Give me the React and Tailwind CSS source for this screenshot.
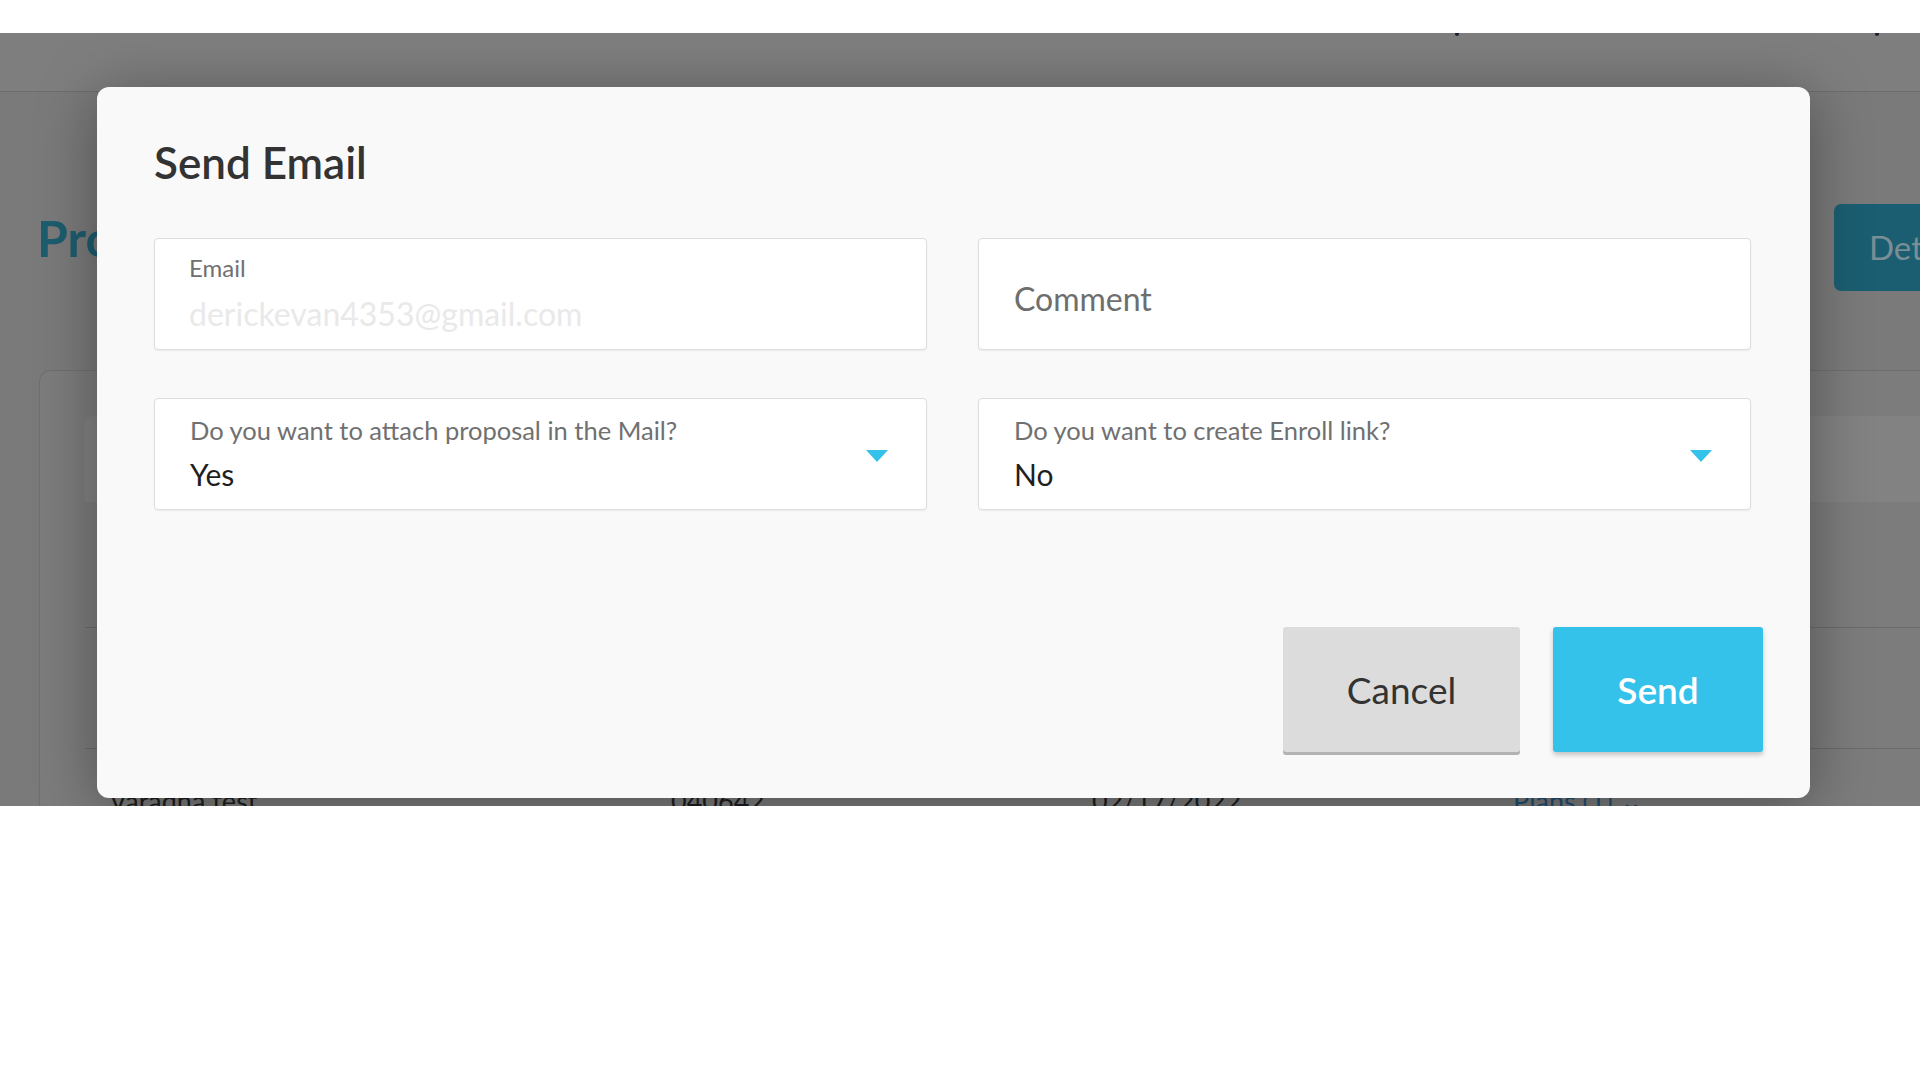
import React from 'react';

// dimmed page that sits behind the modal backdrop
const BackgroundPage = () => (
  <div className="absolute inset-0 bg-[#7a7a7a]">
    <div className="relative h-[59px] bg-[#7e7e7e] border-b border-[#6d6d6d]">
      <span className="absolute top-0 left-[1455px] w-[4px] h-[3px] rounded-b-full bg-[#1c2431]"></span>
      <span className="absolute top-0 left-[1875px] w-[4px] h-[3px] rounded-b-full bg-[#1c2431]"></span>
    </div>

    <div className="flex items-start justify-between pl-[37px] mt-[112px]">
      <h1 className="mt-[6px] text-[50px] leading-[56px] font-bold text-[#1d5d6e]">Proposals</h1>
      <div className="w-[86px] h-[87px] overflow-hidden whitespace-nowrap rounded-l-[7px] bg-[#1b5e71] pl-[35px] flex items-center text-[33px] text-[#7a8e95]">
        Details
      </div>
    </div>

    <div className="ml-[39px] mt-[79px] h-[500px] rounded-tl-[12px] border-l border-t border-[#6f6f6f] bg-[#7c7c7c]">
      <div className="ml-[45px] mt-[45px] h-[86px] rounded-tl-[8px] bg-[#828282]"></div>
      <div className="ml-[45px] mt-[125px] h-px bg-[#6a6a6a]"></div>
      <div className="ml-[45px] mt-[120px] h-px bg-[#6a6a6a]"></div>
      <div className="relative mt-[36px] h-[40px] text-[27px] leading-[32px] text-[#1e1e1e]">
        <span className="absolute left-[69px]">Varadha test</span>
        <span className="absolute left-[631px]">040642</span>
        <span className="absolute left-[1052px]">02/17/2022</span>
        <span className="absolute left-[1473px] text-[#1f4f73]">Plans (1) ⌄</span>
      </div>
    </div>
  </div>
);

const CaretDown = () => (
  <svg width="22" height="12" viewBox="0 0 22 12" className="shrink-0">
    <path d="M0 0 L22 0 L11 12 Z" fill="#35c2ea" />
  </svg>
);

const SelectField = ({ label, value }) => (
  <div className="h-[112px] bg-white border border-[#dedede] rounded-[4px] shadow-[0_1px_2px_rgba(0,0,0,0.06)] pl-[35px] pr-[38px] flex items-start justify-between">
    <div className="pt-[17px]">
      <div className="text-[25.5px] leading-[28px] text-[#707070]">{label}</div>
      <div className="mt-[12px] text-[30px] leading-[36px] text-[#1f1f1f]">{value}</div>
    </div>
    <div className="pt-[51px]">
      <CaretDown />
    </div>
  </div>
);

export default function App() {
  return (
    <div className="w-[1920px] h-[1080px] bg-white overflow-hidden font-['Lato','Open_Sans',sans-serif]">
      <div className="relative mt-[33px] h-[773px] overflow-hidden">
        <BackgroundPage />

        {/* Send Email modal */}
        <div className="absolute left-[97px] top-[54px] w-[1713px] h-[711px] rounded-[12px] bg-[#f9f9f9] shadow-[0_8px_60px_rgba(0,0,0,0.35)] pt-[51px] pl-[57px]">
          <h2 className="text-[44px] leading-[48px] font-semibold text-[#333333]">Send Email</h2>

          <div className="mt-[52px] mr-[59px] grid grid-cols-2 gap-x-[51px] gap-y-[48px]">
            <div className="h-[112px] bg-white border border-[#dedede] rounded-[4px] shadow-[0_1px_2px_rgba(0,0,0,0.06)] pl-[34px] pt-[15px]">
              <div className="text-[24px] leading-[28px] text-[#707070]">Email</div>
              <div className="mt-[14px] text-[32px] leading-[36px] text-[#e9e9e9]">derickevan4353@gmail.com</div>
            </div>

            <div className="h-[112px] bg-white border border-[#dedede] rounded-[4px] shadow-[0_1px_2px_rgba(0,0,0,0.06)] pl-[35px] pt-[42px]">
              <div className="text-[32px] leading-[36px] text-[#6e6e6e]">Comment</div>
            </div>

            <SelectField label="Do you want to attach proposal in the Mail?" value="Yes" />
            <SelectField label="Do you want to create Enroll link?" value="No" />
          </div>

          <div className="mt-[117px] pr-[47px] flex justify-end gap-[33px]">
            <button className="w-[237px] h-[125px] rounded-[3px] bg-[#dcdcdc] shadow-[0_3px_0_#b3b3b3] text-[37px] text-[#333333]">
              Cancel
            </button>
            <button className="w-[210px] h-[125px] rounded-[3px] bg-[#35c2ea] shadow-[0_3px_5px_rgba(0,0,0,0.22)] text-[37px] font-semibold text-white">
              Send
            </button>
          </div>
        </div>
      </div>
    </div>
  );
}
